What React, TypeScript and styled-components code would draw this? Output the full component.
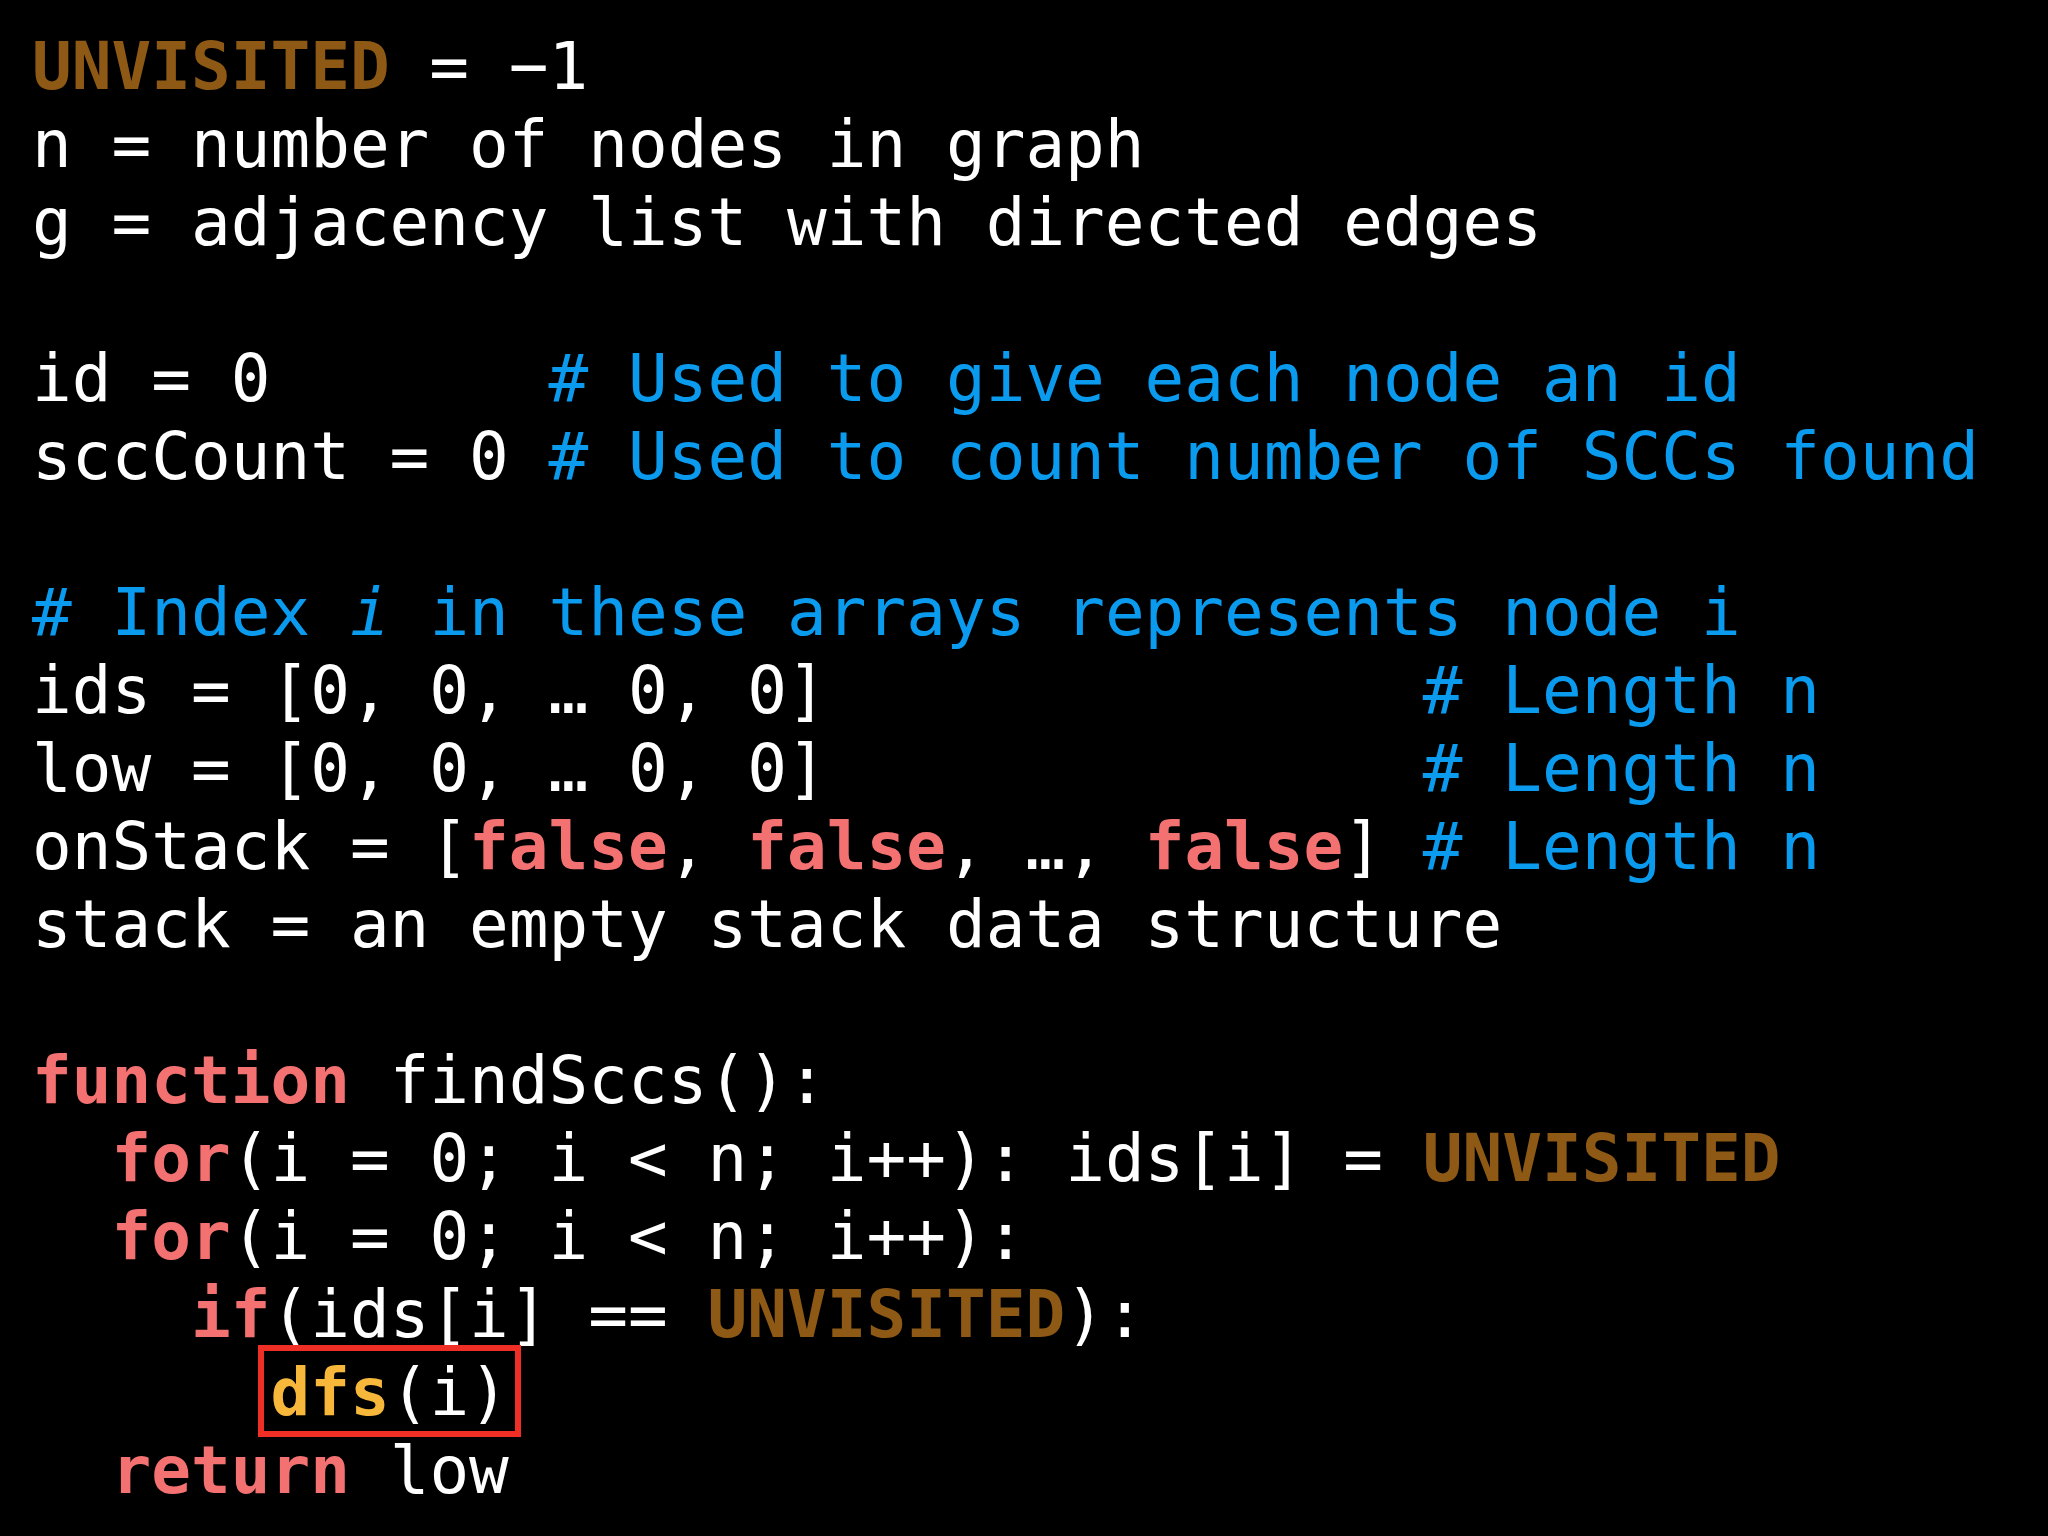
import React from "react";
import styled, { createGlobalStyle, css } from "styled-components";

const GlobalStyle = createGlobalStyle`
  html, body {
    margin: 0;
    padding: 0;
    background: #000000;
  }
`;

type Kind = "plain" | "constant" | "comment" | "keyword" | "call" | "italic";

const palette: Record<Kind, string> = {
  plain: "#ffffff",
  constant: "#8d5914",
  comment: "#0a9bef",
  keyword: "#f47172",
  call: "#f7b73b",
  italic: "#0a9bef",
};

const Slide = styled.main`
  box-sizing: border-box;
  width: 2048px;
  min-height: 100vh;
  padding: 28px 0 0 32px;
  background: #000000;
  font-family: "DejaVu Sans Mono", "Liberation Mono", monospace;
  font-size: 66px;
  line-height: 78px;
  color: #ffffff;
`;

const CodeBlock = styled.pre`
  margin: 0;
  font: inherit;
  display: flex;
  flex-direction: column;
`;

const Line = styled.div`
  white-space: pre;
  height: 78px;
`;

const Token = styled.span<{ $kind: Kind }>`
  color: ${(p) => palette[p.$kind]};
  ${(p) =>
    (p.$kind === "constant" || p.$kind === "keyword" || p.$kind === "call") &&
    css`
      font-weight: bold;
    `}
  ${(p) =>
    p.$kind === "italic" &&
    css`
      font-style: italic;
    `}
`;

const Highlight = styled.span`
  border: 6px solid #ef2f25;
  padding: 3px 6px 0 6px;
  margin: 0 -12px;
`;

type Seg = [Kind, string];

const P = (t: string): Seg => ["plain", t];
const C = (t: string): Seg => ["comment", t];
const K = (t: string): Seg => ["keyword", t];
const U: Seg = ["constant", "UNVISITED"];
const F: Seg = ["keyword", "false"];

const lines: (Seg[] | "highlight")[] = [
  [U, P(" = \u22121")],
  [P("n = number of nodes in graph")],
  [P("g = adjacency list with directed edges")],
  [],
  [P("id = 0       "), C("# Used to give each node an id")],
  [P("sccCount = 0 "), C("# Used to count number of SCCs found")],
  [],
  [C("# Index "), ["italic", "i"], C(" in these arrays represents node i")],
  [P("ids = [0, 0, \u2026 0, 0]               "), C("# Length n")],
  [P("low = [0, 0, \u2026 0, 0]               "), C("# Length n")],
  [P("onStack = ["), F, P(", "), F, P(", \u2026, "), F, P("] "), C("# Length n")],
  [P("stack = an empty stack data structure")],
  [],
  [K("function"), P(" findSccs():")],
  [P("  "), K("for"), P("(i = 0; i < n; i++): ids[i] = "), U],
  [P("  "), K("for"), P("(i = 0; i < n; i++):")],
  [P("    "), K("if"), P("(ids[i] == "), U, P("):")],
  "highlight",
  [P("  "), K("return"), P(" low")],
];

export default function App() {
  return (
    <>
      <GlobalStyle />
      <Slide>
        <CodeBlock>
          {lines.map((line, i) =>
            line === "highlight" ? (
              <Line key={i}>
                {"      "}
                <Highlight>
                  <Token $kind="call">dfs</Token>
                  <Token $kind="plain">(i)</Token>
                </Highlight>
              </Line>
            ) : (
              <Line key={i}>
                {line.length === 0
                  ? " "
                  : line.map(([kind, text], j) => (
                      <Token key={j} $kind={kind}>
                        {text}
                      </Token>
                    ))}
              </Line>
            )
          )}
        </CodeBlock>
      </Slide>
    </>
  );
}
